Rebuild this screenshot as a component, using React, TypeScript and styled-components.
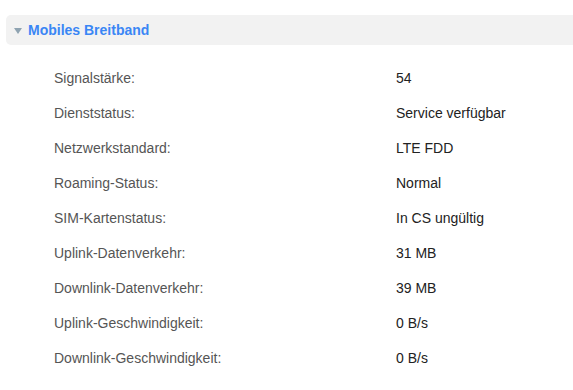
import styled, { createGlobalStyle } from 'styled-components'

const rows: [string, string][] = [
  ['Signalstärke:', '54'],
  ['Dienststatus:', 'Service verfügbar'],
  ['Netzwerkstandard:', 'LTE FDD'],
  ['Roaming-Status:', 'Normal'],
  ['SIM-Kartenstatus:', 'In CS ungültig'],
  ['Uplink-Datenverkehr:', '31 MB'],
  ['Downlink-Datenverkehr:', '39 MB'],
  ['Uplink-Geschwindigkeit:', '0 B/s'],
  ['Downlink-Geschwindigkeit:', '0 B/s'],
]

export default function App() {
  return (
    <>
      <GlobalStyle />
      <Page>
        <SectionHeader>
          <Caret />
          <Title>Mobiles Breitband</Title>
        </SectionHeader>
        <InfoList>
          {rows.map(([label, value]) => (
            <Row key={label}>
              <Label>{label}</Label>
              <Value>{value}</Value>
            </Row>
          ))}
        </InfoList>
      </Page>
    </>
  )
}

const GlobalStyle = createGlobalStyle`
  body {
    margin: 0;
    background: #fff;
    font-family: "Liberation Sans", Arial, sans-serif;
  }
`

const Page = styled.div`
  padding: 15px 0 0 6px;
`

const SectionHeader = styled.div`
  display: flex;
  align-items: center;
  height: 30px;
  background: #f2f2f2;
  border-radius: 5px 0 0 5px;
  padding-left: 8px;
`

const Caret = styled.span`
  width: 0;
  height: 0;
  border-left: 4.5px solid transparent;
  border-right: 4.5px solid transparent;
  border-top: 6px solid #8fa3b1;
  margin: 2px 6px 0 0;
`

const Title = styled.span`
  font-size: 14px;
  font-weight: bold;
  color: #3a86f5;
`

const InfoList = styled.div`
  padding: 15px 0 0 48px;
`

const Row = styled.div`
  display: grid;
  grid-template-columns: 342px 1fr;
  height: 35px;
  align-items: center;
  font-size: 14px;
`

const Label = styled.span`
  color: #555;
`

const Value = styled.span`
  color: #222;
`
